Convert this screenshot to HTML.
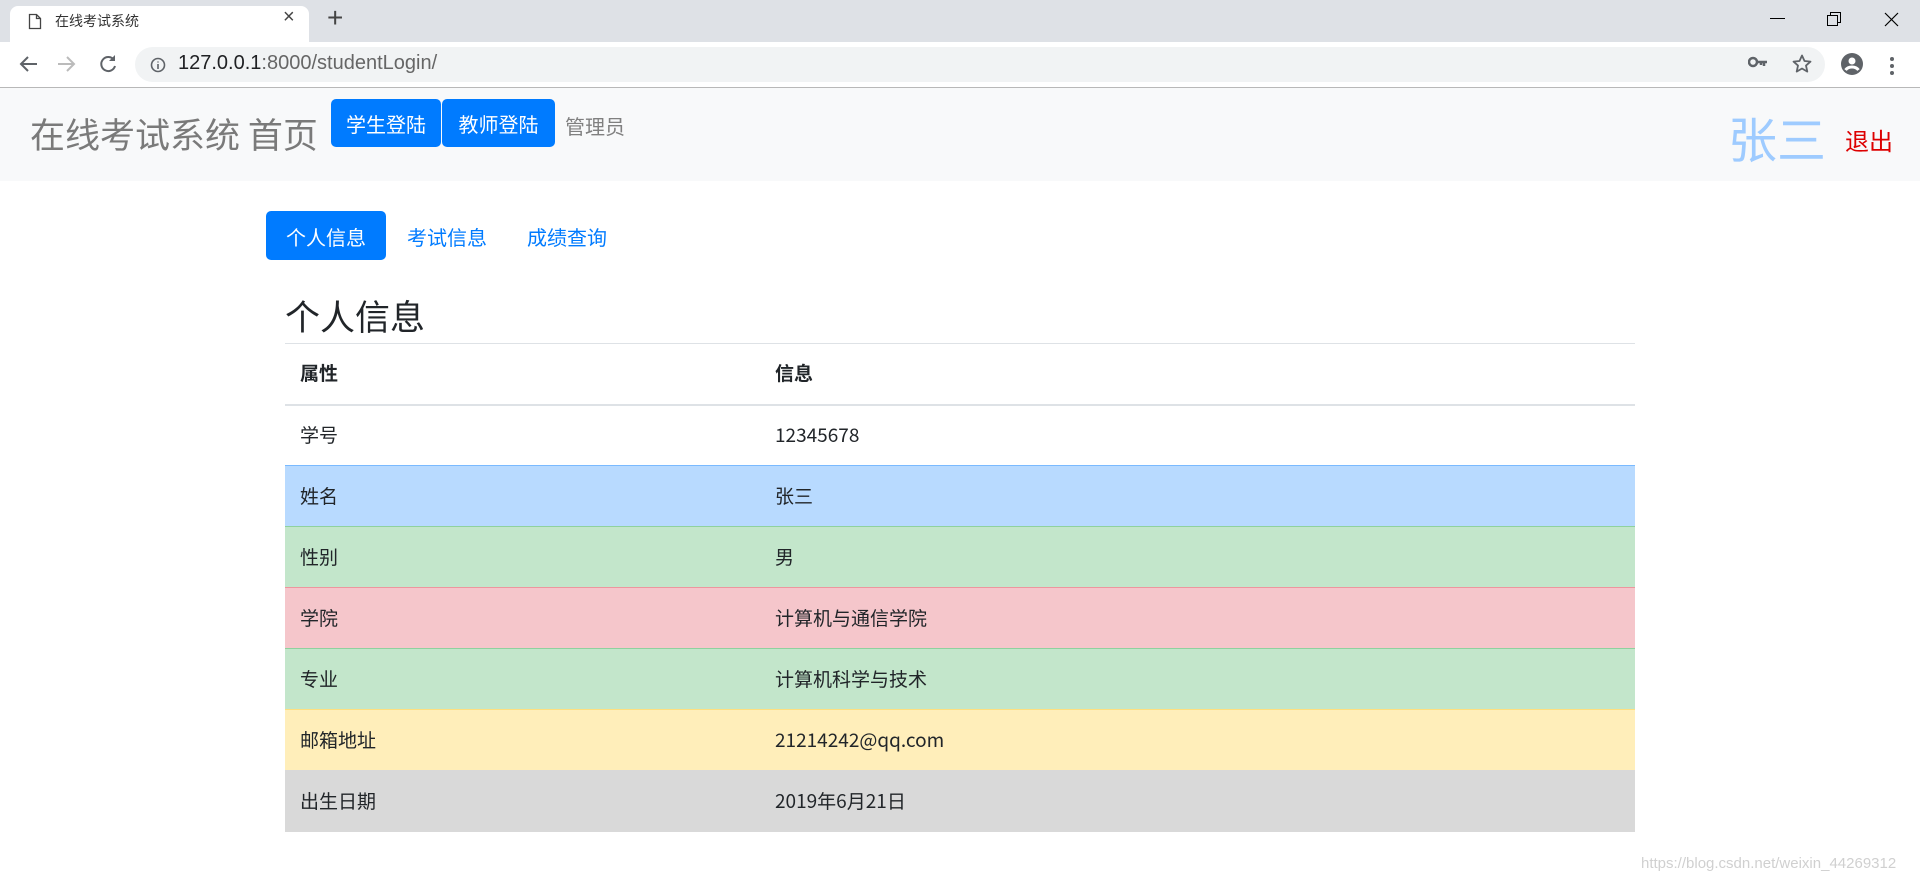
<!DOCTYPE html>
<html><head><meta charset="utf-8"><style>
*{box-sizing:border-box;margin:0;padding:0}
body{width:1920px;height:884px;overflow:hidden;background:#fff;font-family:"Noto Sans CJK SC","Liberation Sans",sans-serif;color:#212529;position:relative}
.abs{position:absolute}
.tabs{left:0;top:0;width:1920px;height:42px;background:#dee1e6}
.tab{left:10px;top:6px;width:299px;height:36px;background:#fff;border-radius:8px 8px 0 0}
.addr{left:0;top:42px;width:1920px;height:46px;background:#fff;border-bottom:1px solid #b8b8b8}
.omni{left:135px;top:47px;width:1690px;height:35px;background:#f1f3f4;border-radius:18px}
.nav{left:0;top:88px;width:1920px;height:93px;background:#f8f9fa}
.btn{background:#007bff;color:#fff;font-size:20px;border-radius:5px;text-align:center;line-height:46px;height:48px;padding-top:2px}
table{border-collapse:collapse;position:absolute;left:285px;top:343px;width:1350px;font-size:19px}
td,th{height:61px;padding:0 15px;text-align:left;border-top:1px solid #dee2e6;vertical-align:middle;line-height:1.2}
th{height:61px;border-bottom:2px solid #dee2e6;font-weight:bold}
td:first-child,th:first-child{width:475px}
</style></head><body>
<div class="abs tabs"></div>
<div class="abs tab"></div>
<svg class="abs" style="left:28px;top:13px" width="14" height="17"><path d="M1.5 1.5h7l4 4v10h-11z M8.5 1.5v4h4" fill="none" stroke="#444" stroke-width="1.3"/></svg>
<div class="abs" style="left:55px;top:11px;font-size:14px;color:#333">在线考试系统</div>
<div class="abs" style="left:283px;top:6px;font-size:20px;color:#444;font-family:'Liberation Sans',sans-serif">×</div>
<div class="abs" style="left:327px;top:2px;font-size:28px;color:#444;font-family:'Liberation Sans',sans-serif">+</div>
<div class="abs" style="left:1770px;top:18px;width:15px;height:1px;background:#000"></div>
<svg class="abs" style="left:1827px;top:12px" width="14" height="14"><rect x="0.5" y="3.5" width="10" height="10" fill="none" stroke="#000"/><path d="M3.5 3.5V0.5h10v10h-3" fill="none" stroke="#000"/></svg>
<svg class="abs" style="left:1884px;top:12px" width="15" height="15"><path d="M1 1l13 13M14 1L1 14" stroke="#000" stroke-width="1.2"/></svg>
<div class="abs addr"></div>
<div class="abs omni"></div>
<svg class="abs" style="left:18px;top:55px" width="20" height="18"><path d="M19 9H3M10 2L3 9l7 7" fill="none" stroke="#5f6368" stroke-width="2"/></svg>
<svg class="abs" style="left:57px;top:55px" width="20" height="18"><path d="M1 9h16M10 2l7 7-7 7" fill="none" stroke="#bbb" stroke-width="2"/></svg>
<svg class="abs" style="left:98px;top:54px" width="20" height="20"><path d="M16 6A7 7 0 1 0 17 12" fill="none" stroke="#5f6368" stroke-width="2"/><path d="M17 1v6h-6z" fill="#5f6368"/></svg>
<svg class="abs" style="left:150px;top:57px" width="16" height="16"><circle cx="8" cy="8" r="6.5" fill="none" stroke="#5f6368" stroke-width="1.6"/><path d="M8 7v5M8 4.5v1" stroke="#5f6368" stroke-width="1.6"/></svg>
<div class="abs" style="left:178px;top:52px;font-size:20px;color:#202124;font-family:'Liberation Sans',sans-serif">127.0.0.1<span style="color:#666">:8000/studentLogin/</span></div>
<svg class="abs" style="left:1748px;top:55px" width="20" height="14"><circle cx="5" cy="7" r="4" fill="none" stroke="#5f6368" stroke-width="2.5"/><path d="M9 7h10M16 7v4M13 7v3" stroke="#5f6368" stroke-width="2.5"/></svg>
<svg class="abs" style="left:1792px;top:54px" width="20" height="20"><path d="M10 1.5l2.5 5.5 6 .6-4.5 4 1.3 6L10 14.5 4.7 17.6 6 11.6l-4.5-4 6-.6z" fill="none" stroke="#5f6368" stroke-width="1.8" stroke-linejoin="round"/></svg>
<svg class="abs" style="left:1841px;top:53px" width="22" height="22"><circle cx="11" cy="11" r="11" fill="#5f6368"/><circle cx="11" cy="8" r="3.5" fill="#fff"/><path d="M4.5 17c3-4 10-4 13 0" stroke="#fff" stroke-width="3" fill="none"/></svg>
<svg class="abs" style="left:1889px;top:56px" width="6" height="20"><circle cx="3" cy="3" r="2" fill="#5f6368"/><circle cx="3" cy="10" r="2" fill="#5f6368"/><circle cx="3" cy="17" r="2" fill="#5f6368"/></svg>
<div class="abs nav"></div>
<div class="abs" style="left:30px;top:110px;font-size:35px;color:#7a7a7a;white-space:nowrap;line-height:48px">在线考试系统 首页</div>
<div class="abs btn" style="left:331px;top:99px;width:110px">学生登陆</div>
<div class="abs btn" style="left:442px;top:99px;width:113px">教师登陆</div>
<div class="abs" style="left:565px;top:111px;font-size:20px;color:#808080">管理员</div>
<div class="abs" style="left:1728px;top:108px;font-size:49px;color:#9ecbff;line-height:60px">张三</div>
<div class="abs" style="left:1845px;top:122px;font-size:24px;color:#d00">退出</div>
<div class="abs btn" style="left:266px;top:211px;width:120px;height:49px;line-height:47px">个人信息</div>
<div class="abs" style="left:407px;top:222px;font-size:20px;color:#007bff">考试信息</div>
<div class="abs" style="left:527px;top:222px;font-size:20px;color:#007bff">成绩查询</div>
<div class="abs" style="left:285px;top:290px;font-size:35px;color:#212529">个人信息</div>
<table>
<tr><th>属性</th><th>信息</th></tr>
<tr><td style="border-top:none">学号</td><td style="border-top:none">12345678</td></tr>
<tr style="background:#b8daff"><td style="border-color:#7abaff">姓名</td><td style="border-color:#7abaff">张三</td></tr>
<tr style="background:#c3e6cb"><td style="border-color:#8fd19e">性别</td><td style="border-color:#8fd19e">男</td></tr>
<tr style="background:#f5c6cb"><td style="border-color:#ed969e">学院</td><td style="border-color:#ed969e">计算机与通信学院</td></tr>
<tr style="background:#c3e6cb"><td style="border-color:#8fd19e">专业</td><td style="border-color:#8fd19e">计算机科学与技术</td></tr>
<tr style="background:#ffeeba"><td style="border-color:#ffdf7e">邮箱地址</td><td style="border-color:#ffdf7e">21214242@qq.com</td></tr>
<tr style="background:#d9d9d9"><td style="border-color:#d9d9d9">出生日期</td><td style="border-color:#d9d9d9">2019年6月21日</td></tr>
</table>
<div class="abs" style="left:1641px;top:855px;font-size:15px;color:#d0d0d0;font-family:'Liberation Sans',sans-serif">https://blog.csdn.net/weixin_44269312</div>
</body></html>
